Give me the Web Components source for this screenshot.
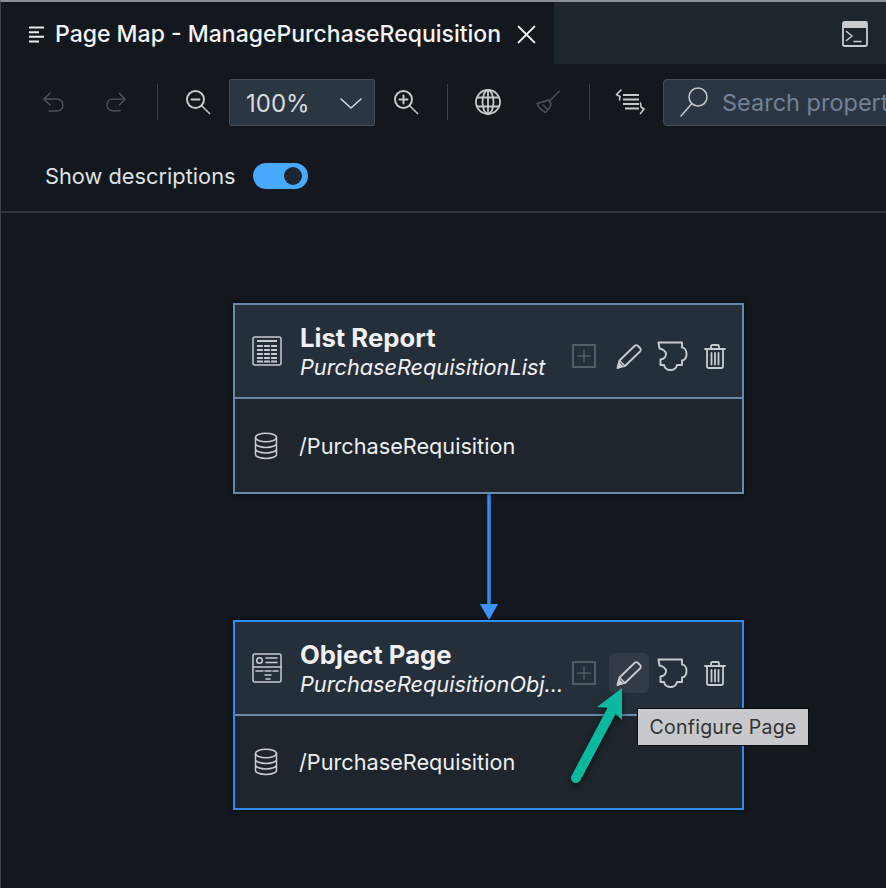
<!DOCTYPE html>
<html>
<head>
<meta charset="utf-8">
<style>
  html, body { margin: 0; background: #13181e; }
  body { width: 886px; height: 888px; overflow: hidden; font-family: Inter, "Noto Sans", sans-serif; }
</style>
</head>
<body>
<pm-app>
  <pm-tabbar slot="top" title-text="Page Map - ManagePurchaseRequisition"></pm-tabbar>
  <pm-toolbar slot="top"></pm-toolbar>
  <pm-options slot="top"></pm-options>
  <pm-canvas slot="canvas">
    <pm-node name="List Report" desc="PurchaseRequisitionList" entity="/PurchaseRequisition" kind="list"></pm-node>
    <pm-link></pm-link>
    <pm-node name="Object Page" desc="PurchaseRequisitionObjectPage" entity="/PurchaseRequisition" kind="object" selected hover-edit></pm-node>
  </pm-canvas>
</pm-app>

<script>
// -- Icons, each drawn on the viewBox passed to icon() --
const ICONS = {
  outline: '<path d="M0 1.500h15M0 6.200h10M0 10.800h15M0 15.500h10" stroke-width="2" stroke-linecap="butt"/>',
  close: '<path d="M5 5l14 14M19 5L5 19" stroke-width="1.800"/>',
  terminal: '<rect x="1" y="1" width="24" height="24" rx="1.500" stroke-width="1.800"/><path d="M1 4.500h24" stroke-width="5" stroke-linecap="butt"/><path d="M4.500 10.500l5.500 4.500-5.500 4.500M12 20.500h7" stroke-width="1.600"/>',
  undo: '<path d="M9 3L3 9l6 6"/><path d="M3 9h13a6 6 0 0 1 0 12H8"/>',
  redo: '<path d="M17 3l6 6-6 6"/><path d="M23 9H10a6 6 0 0 0 0 12h8"/>',
  zoomOut: '<circle cx="10.500" cy="10.500" r="8.500" stroke-width="2"/><path d="M16.500 16.500l8 8"/><path d="M6.500 10.500h8" stroke-width="2"/>',
  zoomIn: '<circle cx="10.500" cy="10.500" r="8.500" stroke-width="2"/><path d="M16.500 16.500l8 8"/><path d="M6.500 10.500h8M10.500 6.500v8" stroke-width="2"/>',
  globe: '<circle cx="13" cy="13" r="12" stroke-width="1.800"/><ellipse cx="13" cy="13" rx="5.500" ry="12" stroke-width="1.800"/><path d="M13 1v24M2.500 8.500h21M2.500 17.500h21" stroke-width="1.800"/>',
  broom: '<path d="M23.500 1L13 11.500"/><path d="M12 10c-3 1.500-7 2.500-11 3.500 1.500 3.500 4.500 7 8.500 9 1.500-1.500 5-5 5.500-9z" stroke-width="1.600"/><path d="M7 15l4 4"/>',
  format: '<path d="M6 1L1.500 5.500 5 7.500 4.500 11" stroke-width="1.600"/><path d="M8 6h16M8 10.500h16M8 15h16M10 19.500h14" stroke-width="2" stroke-linecap="butt"/><path d="M25.500 14l.5 4 3 2-3.500 4.500" stroke-width="1.600"/>',
  search: '<circle cx="18" cy="10" r="9"/><path d="M11.500 17L1 29"/>',
  chevron: '<path d="M1 2l10 9 10-9"/>',
  table: '<rect x="1" y="1" width="28" height="28" rx="2"/><path d="M5 5h20M5 10h20M5 14h20M5 18h20M5 22h20M5 25.500h20" stroke-width="1.800" stroke-linecap="butt"/><path d="M11.500 8v18M18.500 8v18" stroke="#252f3a" stroke-width="1.200"/>',
  page: '<rect x="1" y="1" width="28" height="28" rx="2"/><path d="M1 14h28"/><circle cx="7.500" cy="7.500" r="2.800"/><path d="M14 5h11M14 9.500h11M4 18h7M13 18h6M21 18h5M13 22h6M14 26h4"/>',
  db: '<ellipse cx="12" cy="5.500" rx="10.500" ry="4.200"/><path d="M1.500 5.500v17c0 2.200 4.700 4 10.500 4s10.500-1.800 10.500-4v-17M1.500 11.500c0 2.200 4.700 4 10.500 4s10.500-1.800 10.500-4M1.500 17c0 2.200 4.700 4 10.500 4s10.500-1.800 10.500-4"/>',
  add: '<rect x="1" y="1" width="22" height="22" stroke-width="2" stroke-linejoin="miter"/><path d="M12 6v12M6 12h12" stroke-width="1.500"/>',
  pencil: '<path d="M1.500 25l2-7.500L18.500 3c1-1 2.500-1 3.500 0l2 2c1 1 1 2.500 0 3.500L9 23z" stroke-width="1.800"/><path d="M3.500 17.500L9 23"/><path d="M1.500 25l1.500-5 3 3z" fill="currentColor"/>',
  puzzle: '<path d="M1.500 1.500H25v5c3 0 4.500 3.500 4.500 6.500s-1.500 6-4.500 6.500v4.500h-5c-.5 3-3.500 5-6.500 5s-6-2-6.500-5H3.500v-5.500c3-.5 5.500-2.500 5.500-5.500S5 8 2.500 7.500z" stroke-width="1.900"/>',
  trash: '<path d="M1 5h20M7 5V2.500c0-.8.500-1.500 1.500-1.500h5c1 0 1.500.700 1.500 1.500V5" stroke-width="1.800"/><path d="M3 5v17.500c0 1 .700 1.500 1.500 1.500h13c.800 0 1.500-.500 1.500-1.500V5" stroke-width="1.800"/><path d="M7.500 9v11.500M11 9v11.500M14.500 9v11.500" stroke-width="1.800"/>'
};

function icon(name, w, h, vbW, vbH, sw) {
  return '<svg width="' + w + '" height="' + h + '" viewBox="0 0 ' + vbW + ' ' + vbH + '" fill="none" stroke="currentColor" stroke-width="' + (sw || 1.5) + '" stroke-linejoin="round" stroke-linecap="round" aria-hidden="true">' + ICONS[name] + '</svg>';
}

class PmApp extends HTMLElement {
  constructor() {
    super();
    this.attachShadow({ mode: "open" });
    this.shadowRoot.innerHTML = `<style>
      :host { display: flex; flex-direction: column; width: 886px; height: 888px; box-sizing: border-box;
        border-top: 2px solid #8a9096; border-left: 1px solid #39414a; background: #13181e; color: #eef0f2; }
      .top { display: block; border-bottom: 2px solid #2c353f; flex: none; }
      .canvas { flex: 1; min-height: 0; }
    </style>
    <div class="top"><slot name="top"></slot></div>
    <div class="canvas"><slot name="canvas"></slot></div>`;
  }
}

class PmTabbar extends HTMLElement {
  constructor() {
    super();
    this.attachShadow({ mode: "open" });
  }
  connectedCallback() {
    this.shadowRoot.innerHTML = `<style>
      :host { display: flex; height: 62px; background: #1d252d; }
      .tab { width: 553px; box-sizing: border-box; display: flex; align-items: center; background: #13181e; padding: 2px 0 0 28px; }
      .title { font-size: 23px; font-weight: 500; color: #f2f3f4; margin-left: 11px; white-space: nowrap; }
      .x { margin-left: 12px; display: flex; color: #f2f3f4; }
      .grow { flex: 1; }
      .term { color: #c9cccf; display: flex; margin: 0 18px 0 0; align-items: center; padding-top: 2px; }
      .ol { display: flex; color: #e8eaec; }
    </style>
    <div class="tab">
      <span class="ol">${icon("outline", 15, 17, 15, 17)}</span>
      <span class="title">${this.getAttribute("title-text")}</span>
      <span class="x">${icon("close", 27, 27, 24, 24)}</span>
    </div>
    <div class="grow"></div>
    <div class="term">${icon("terminal", 26, 26, 26, 26)}</div>`;
  }
}

class PmToolbar extends HTMLElement {
  constructor() {
    super();
    this.attachShadow({ mode: "open" });
    this.shadowRoot.innerHTML = `<style>
      :host { display: flex; align-items: center; height: 76px; padding-left: 40px; overflow: hidden; white-space: nowrap; }
      .b { display: flex; flex: none; color: #c6c9cc; }
      .off { color: #4b5157; }
      .sep { width: 1px; height: 36px; background: #39414a; flex: none; }
      .select { flex: none; width: 146px; height: 47px; box-sizing: border-box; background: #2c3642; border: 1px solid #464c52; border-radius: 2px;
        display: flex; align-items: center; justify-content: space-between; padding: 2px 12px 0 16px; font-size: 24px; color: #d8dbde; }
      .search { flex: none; width: 300px; height: 47px; box-sizing: border-box; background: #2c3642; border: 1px solid #464c52; border-radius: 4px;
        display: flex; align-items: center; padding-left: 16px; font-size: 23.500px; color: #6f8297; margin-left: 18px; }
      .search span { margin-left: 14px; }
      .search svg { color: #c6c9cc; flex: none; }
    </style>
    <span class="b off">${icon("undo", 25, 25, 25, 25)}</span>
    <span class="b off" style="margin-left:37px">${icon("redo", 25, 25, 26, 25)}</span>
    <span class="sep" style="margin-left:29px"></span>
    <span class="b" style="margin-left:27px">${icon("zoomOut", 26, 26, 26, 26)}</span>
    <span class="select" style="margin-left:18px"><span>100%</span>${icon("chevron", 22, 13, 22, 13)}</span>
    <span class="b" style="margin-left:18px">${icon("zoomIn", 26, 26, 26, 26)}</span>
    <span class="sep" style="margin-left:28px"></span>
    <span class="b" style="margin-left:27px">${icon("globe", 26, 26, 26, 26)}</span>
    <span class="b off" style="margin-left:35px">${icon("broom", 24, 24, 24, 24)}</span>
    <span class="sep" style="margin-left:29px"></span>
    <span class="b" style="margin-left:25px">${icon("format", 30, 26, 30, 26)}</span>
    <span class="search">${icon("search", 28, 30, 28, 30)}<span>Search properties</span></span>`;
  }
}

class PmOptions extends HTMLElement {
  constructor() {
    super();
    this.attachShadow({ mode: "open" });
    this.shadowRoot.innerHTML = `<style>
      :host { display: flex; align-items: center; height: 71px; box-sizing: border-box; padding-left: 44px; font-size: 21.800px; color: #dfe1e3; }
      .sw { margin-left: 17px; width: 55px; height: 26px; border-radius: 13px; background: #47a9fd; display: flex; align-items: center; justify-content: flex-end; padding-right: 6px; box-sizing: border-box; }
      .knob { width: 18px; height: 18px; border-radius: 50%; background: #1d252d; }
    </style>
    <span>Show descriptions</span><span class="sw"><span class="knob"></span></span>`;
  }
}

class PmCanvas extends HTMLElement {
  constructor() {
    super();
    this.attachShadow({ mode: "open" });
    this.shadowRoot.innerHTML = `<style>
      :host { display: flex; flex-direction: column; align-items: flex-start; padding: 90px 0 0 232px; }
    </style><slot></slot>`;
  }
}

class PmNode extends HTMLElement {
  constructor() {
    super();
    this.attachShadow({ mode: "open" });
  }
  connectedCallback() {
    const sel = this.hasAttribute("selected");
    const hover = this.hasAttribute("hover-edit");
    this.shadowRoot.innerHTML = `<style>
      :host { display: block; position: relative; width: 511px; box-sizing: border-box; border: 2px solid ${sel ? "#2f8bf5" : "#6a88a8"}; background: #1e252d;
        box-shadow: 0 0 4px rgba(0,0,0,.6); }
      .head { height: 94px; box-sizing: border-box; background: #252f3a; border-bottom: 2px solid #6a88a8; display: flex; align-items: center; padding-left: 17px; }
      .kind { display: flex; color: #c9cccf; flex: none; }
      .titles { margin-left: 18px; width: 264px; flex: none; min-width: 0; padding-top: 2px; }
      .name { font-size: 25.700px; font-weight: 700; line-height: 30px; color: #eef0f2; white-space: nowrap; }
      .desc { font-size: 21.700px; font-style: italic; line-height: 28px; color: #f0f1f3; white-space: nowrap; overflow: hidden; text-overflow: ellipsis; }
      .acts { display: flex; align-items: center; color: #c9cccf; margin-left: 0; padding-top: 10px; }
      .a { width: 40px; height: 40px; display: flex; align-items: center; justify-content: center; border-radius: 6px; flex: none; }
      .add { color: #535a61; }
      .hover { background: #333c46; }
      .body { height: ${sel ? 92 : 93}px; box-sizing: border-box; display: flex; align-items: center; padding-left: 19px; font-size: 21.700px; color: #eceef0; }
      .body .label { margin-left: 21px; }
      .db { display: flex; color: #c9cccf; }
    </style>
    <div class="head">
      <span class="kind">${icon(this.getAttribute("kind") === "list" ? "table" : "page", 30, 30, 30, 30)}</span>
      <div class="titles"><div class="name">${this.getAttribute("name")}</div><div class="desc">${this.getAttribute("desc")}</div></div>
      <div class="acts">
        <span class="a add">${icon("add", 24, 24, 24, 24)}</span>
        <span class="a ${hover ? "hover" : ""}" style="margin-left:5px">${icon("pencil", 27, 27, 27, 27)}</span>
        <span class="a" style="margin-left:7px;width:32px">${icon("puzzle", 31, 30, 31, 30)}</span>
        <span class="a" style="margin-left:16px;width:22px">${icon("trash", 22, 25, 22, 25)}</span>
      </div>
    </div>
    <div class="body"><span class="db">${icon("db", 24, 28, 24, 28)}</span><span class="label">${this.getAttribute("entity")}</span></div>
    ${hover ? `<pm-tooltip text="Configure Page"></pm-tooltip><pm-pointer></pm-pointer>` : ""}`;
  }
}

class PmLink extends HTMLElement {
  constructor() {
    super();
    this.attachShadow({ mode: "open" });
    this.shadowRoot.innerHTML = `<style>
      :host { display: block; width: 511px; height: 126px; }
      svg { display: block; margin-left: 247px; }
    </style>
    <svg width="18" height="126" viewBox="0 0 18 126"><path d="M9 0v112" stroke="#2f8bf5" stroke-width="3.500" fill="none"/><path d="M0 110H18L9 126z" fill="#3b93fb"/></svg>`;
  }
}

class PmTooltip extends HTMLElement {
  constructor() {
    super();
    this.attachShadow({ mode: "open" });
  }
  connectedCallback() {
    this.shadowRoot.innerHTML = `<style>
      :host { position: absolute; left: 403px; top: 87px; height: 36px; width: 170px; box-sizing: border-box; background: #c7c9cc;
        color: #333; font-size: 19.500px; display: flex; align-items: center; justify-content: center; letter-spacing: .25px; outline: 1px solid #0b0e11; white-space: nowrap; }
    </style>${this.getAttribute("text")}`;
  }
}

class PmPointer extends HTMLElement {
  constructor() {
    super();
    this.attachShadow({ mode: "open" });
    this.shadowRoot.innerHTML = `<style>
      :host { position: absolute; left: 330px; top: 60px; width: 60px; height: 110px; }
      svg { display: block; overflow: visible; filter: drop-shadow(0 3px 3px rgba(0,0,0,.55)); }
    </style>
    <svg width="60" height="110" viewBox="0 0 60 110">
      <path d="M11 96L47 28" stroke="#0bb99f" stroke-width="10" stroke-linecap="round" fill="none"/>
      <path d="M57 6L32 25l13 1 12 12z" fill="#0bb99f"/>
    </svg>`;
  }
}

// Children first, so nothing upgrades before its dependencies are known
customElements.define("pm-tooltip", PmTooltip);
customElements.define("pm-pointer", PmPointer);
customElements.define("pm-tabbar", PmTabbar);
customElements.define("pm-toolbar", PmToolbar);
customElements.define("pm-options", PmOptions);
customElements.define("pm-link", PmLink);
customElements.define("pm-node", PmNode);
customElements.define("pm-canvas", PmCanvas);
customElements.define("pm-app", PmApp);
</script>
</body>
</html>
